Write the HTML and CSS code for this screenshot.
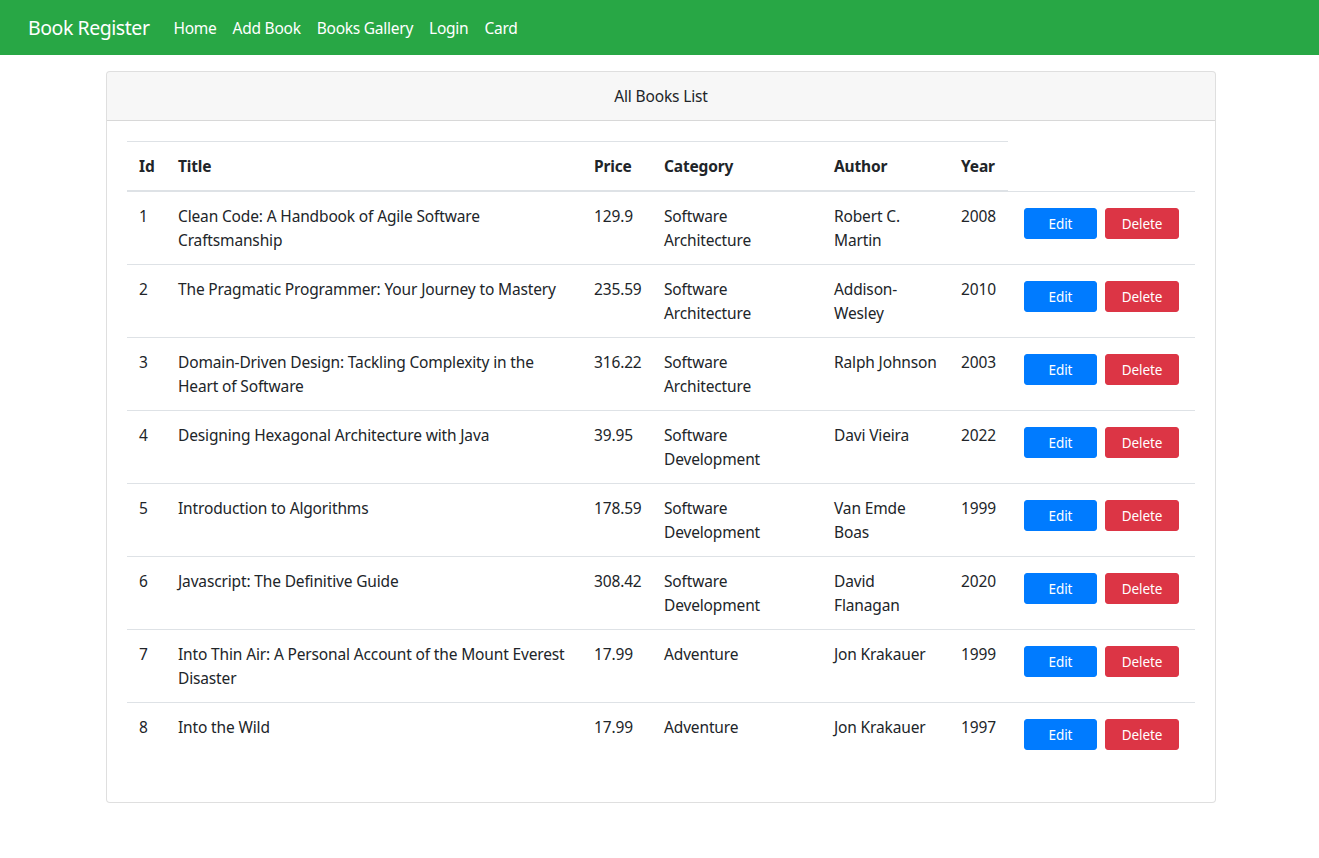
FILE: index.html
```html
<!DOCTYPE html>
<html lang="en">
<head>
<meta charset="utf-8">
<title>Book Register</title>
<link rel="stylesheet" href="styles.css">
</head>
<body>
<nav class="navbar">
  <a class="brand" href="#">Book Register</a>
  <ul class="nav">
    <li><a class="nav-link" href="#">Home</a></li>
    <li><a class="nav-link" href="#">Add Book</a></li>
    <li><a class="nav-link" href="#">Books Gallery</a></li>
    <li><a class="nav-link" href="#">Login</a></li>
    <li><a class="nav-link" href="#">Card</a></li>
  </ul>
</nav>
<main class="page">
  <section class="card">
    <header class="card-header">All Books List</header>
    <div class="card-body">
      <table class="table">
        <colgroup>
          <col class="c-id"><col class="c-title"><col class="c-price"><col class="c-cat"><col class="c-author"><col class="c-year"><col class="c-actions">
        </colgroup>
        <thead>
          <tr><th>Id</th><th>Title</th><th>Price</th><th>Category</th><th>Author</th><th>Year</th></tr>
        </thead>
        <tbody>
          <tr><td>1</td><td>Clean Code: A Handbook of Agile Software Craftsmanship</td><td>129.9</td><td>Software Architecture</td><td>Robert C. Martin</td><td>2008</td><td><div class="actions"><button class="btn btn-edit">Edit</button><button class="btn btn-delete">Delete</button></div></td></tr>
          <tr><td>2</td><td>The Pragmatic Programmer: Your Journey to Mastery</td><td>235.59</td><td>Software Architecture</td><td>Addison-Wesley</td><td>2010</td><td><div class="actions"><button class="btn btn-edit">Edit</button><button class="btn btn-delete">Delete</button></div></td></tr>
          <tr><td>3</td><td>Domain-Driven Design: Tackling Complexity in the Heart of Software</td><td>316.22</td><td>Software Architecture</td><td>Ralph Johnson</td><td>2003</td><td><div class="actions"><button class="btn btn-edit">Edit</button><button class="btn btn-delete">Delete</button></div></td></tr>
          <tr><td>4</td><td>Designing Hexagonal Architecture with Java</td><td>39.95</td><td>Software Development</td><td>Davi Vieira</td><td>2022</td><td><div class="actions"><button class="btn btn-edit">Edit</button><button class="btn btn-delete">Delete</button></div></td></tr>
          <tr><td>5</td><td>Introduction to Algorithms</td><td>178.59</td><td>Software Development</td><td>Van Emde Boas</td><td>1999</td><td><div class="actions"><button class="btn btn-edit">Edit</button><button class="btn btn-delete">Delete</button></div></td></tr>
          <tr><td>6</td><td>Javascript: The Definitive Guide</td><td>308.42</td><td>Software Development</td><td>David Flanagan</td><td>2020</td><td><div class="actions"><button class="btn btn-edit">Edit</button><button class="btn btn-delete">Delete</button></div></td></tr>
          <tr><td>7</td><td>Into Thin Air: A Personal Account of the Mount Everest Disaster</td><td>17.99</td><td>Adventure</td><td>Jon Krakauer</td><td>1999</td><td><div class="actions"><button class="btn btn-edit">Edit</button><button class="btn btn-delete">Delete</button></div></td></tr>
          <tr><td>8</td><td>Into the Wild</td><td>17.99</td><td>Adventure</td><td>Jon Krakauer</td><td>1997</td><td><div class="actions"><button class="btn btn-edit">Edit</button><button class="btn btn-delete">Delete</button></div></td></tr>
        </tbody>
      </table>
    </div>
  </section>
</main>
</body>
</html>
```
FILE: styles.css
```css
* { box-sizing: border-box; }
html, body {
  margin: 0;
  padding: 0;
  background: #fff;
  color: #212529;
  font-family: "Noto Sans", "Open Sans", "DejaVu Sans", sans-serif;
  font-size: 15.5px;
  letter-spacing: -0.15px;
  line-height: 24px;
}
a { text-decoration: none; }

.navbar {
  display: flex;
  align-items: center;
  height: 55px;
  padding: 0 16px 0 28px;
  background: #28a745;
}
.brand {
  color: #fff;
  font-size: 19.5px;
  letter-spacing: -0.45px;
  line-height: 30px;
  margin-right: 16px;
}
.nav {
  display: flex;
  list-style: none;
  margin: 0;
  padding: 0;
}
.nav-link {
  display: block;
  padding: 8px;
  color: #fff;
  letter-spacing: -0.25px;
  line-height: 24px;
}

.page {
  display: flex;
  justify-content: center;
  padding: 16px 0 0 3px;
}
.card {
  width: 1110px;
  border: 1px solid rgba(0, 0, 0, 0.125);
  border-radius: 4px;
  background: #fff;
  overflow: hidden;
}
.card-header {
  padding: 12px 20px;
  text-align: center;
  background: rgba(0, 0, 0, 0.03);
  border-bottom: 1px solid rgba(0, 0, 0, 0.125);
}
.card-body {
  padding: 20px;
}

.table {
  width: 100%;
  table-layout: fixed;
  border-collapse: collapse;
  margin-bottom: 16px;
}
.c-id { width: 39px; }
.c-title { width: 416px; }
.c-price { width: 70px; }
.c-cat { width: 170px; }
.c-author { width: 127px; }
.c-year { width: 59px; }
.c-actions { width: 187px; }

.table th,
.table td {
  padding: 12px;
  border-top: 1px solid #dee2e6;
  text-align: left;
  vertical-align: top;
}
.table thead th {
  font-weight: 700;
  vertical-align: bottom;
  border-bottom: 2px solid #dee2e6;
}

.actions {
  display: flex;
}
.btn {
  margin: 4px;
  height: 31px;
  padding: 5px 8px 3px;
  border: 1px solid transparent;
  border-radius: 3px;
  color: #fff;
  font-family: inherit;
  font-size: 13.5px;
  letter-spacing: -0.1px;
  line-height: 21px;
  text-align: center;
  cursor: pointer;
}
.btn-edit {
  width: 73px;
  background: #007bff;
  border-color: #007bff;
}
.btn-delete {
  width: 74px;
  background: #dc3545;
  border-color: #dc3545;
}
```
